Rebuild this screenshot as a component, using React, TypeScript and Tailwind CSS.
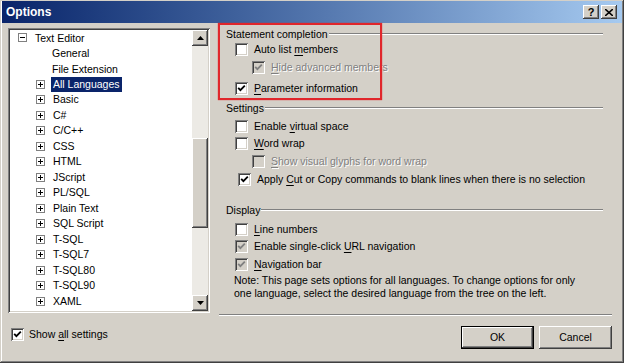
import React from "react";

const FONT = "font-['Liberation_Sans','Arial',sans-serif]";

// raised / sunken win2k bevels
const RAISED =
  "shadow-[inset_-1px_-1px_0_#404040,inset_1px_1px_0_#ffffff,inset_-2px_-2px_0_#808080,inset_2px_2px_0_#d4d0c8]";
const SUNKEN =
  "shadow-[inset_1px_1px_0_#808080,inset_-1px_-1px_0_#ffffff,inset_2px_2px_0_#404040,inset_-2px_-2px_0_#d4d0c8]";

function Key({ text, k }: { text: string; k: number }) {
  return (
    <>
      {text.slice(0, k)}
      <span className="underline underline-offset-[2px]">{text[k]}</span>
      {text.slice(k + 1)}
    </>
  );
}

function Check({ checked, disabled, grey }: { checked?: boolean; disabled?: boolean; grey?: boolean }) {
  const bg = disabled || grey ? "bg-[#d4d0c8]" : "bg-white";
  const mark = disabled || grey ? "#808080" : "#000000";
  return (
    <div className={`w-[13px] h-[13px] shrink-0 flex items-center justify-center ${bg} ${SUNKEN}`}>
      {checked && (
        <svg width="9" height="9" viewBox="0 0 9 9">
          <polyline points="1.2,3.8 3.4,6.2 7.8,1.6" fill="none" stroke={mark} strokeWidth="1.8" />
        </svg>
      )}
    </div>
  );
}

function Option({
  label, k, checked, disabled, grey, indent = 0, mt,
}: { label: string; k: number; checked?: boolean; disabled?: boolean; grey?: boolean; indent?: number; mt: string }) {
  return (
    <div className={`flex items-center h-[14px] ${mt}`} style={{ paddingLeft: indent }}>
      <Check checked={checked} disabled={disabled} grey={grey} />
      <span
        className={`ml-[6px] leading-none whitespace-nowrap ${
          disabled ? "text-[#808080] [text-shadow:1px_1px_0_#ffffff]" : "text-black"
        }`}
      >
        <Key text={label} k={k} />
      </span>
    </div>
  );
}

function Heading({ label, mt }: { label: string; mt: string }) {
  return (
    <div className={`flex items-center h-[14px] pr-[9px] ${mt}`}>
      <span className="leading-none whitespace-nowrap">{label}</span>
      <div className="flex-1 ml-[1px] h-[2px] border-t border-t-[#808080] border-b border-b-white" />
    </div>
  );
}

function ExpandBox({ minus }: { minus?: boolean }) {
  return (
    <div className="w-[9px] h-[9px] border border-[#808080] bg-white flex items-center justify-center relative shrink-0">
      <div className="w-[5px] h-[1px] bg-black" />
      {!minus && <div className="absolute w-[1px] h-[5px] bg-black" />}
    </div>
  );
}

const languages = [
  "All Languages", "Basic", "C#", "C/C++", "CSS", "HTML", "JScript", "PL/SQL",
  "Plain Text", "SQL Script", "T-SQL", "T-SQL7", "T-SQL80", "T-SQL90", "XAML",
];

function Arrow({ up }: { up?: boolean }) {
  return (
    <svg width="7" height="4" viewBox="0 0 7 4">
      <polygon points={up ? "3.5,0 7,4 0,4" : "0,0 7,0 3.5,4"} fill="#000" />
    </svg>
  );
}

function Tree() {
  return (
    <div className={`w-[202px] h-[285px] bg-white flex p-[2px] ${SUNKEN}`}>
      <div className="flex-1 overflow-hidden">
        <div className="flex items-center h-[15.5px] pl-[8px]">
          <ExpandBox minus />
          <span className="ml-[8px] leading-none">Text Editor</span>
        </div>
        <div className="flex items-center h-[15.5px] pl-[42px]">
          <span className="leading-none">General</span>
        </div>
        <div className="flex items-center h-[15.5px] pl-[42px]">
          <span className="leading-none">File Extension</span>
        </div>
        {languages.map((l, i) => (
          <div key={l} className="flex items-center h-[15.5px] pl-[26px]">
            <ExpandBox />
            <span
              className={`ml-[6px] px-[2px] leading-[15px] ${
                i === 0 ? "bg-[#0a246a] text-white" : ""
              }`}
            >
              {l}
            </span>
          </div>
        ))}
      </div>
      {/* vertical scrollbar */}
      <div className="w-[16px] flex flex-col bg-[#eceae5]">
        <div className={`h-[16px] bg-[#d4d0c8] flex items-center justify-center ${RAISED}`}>
          <Arrow up />
        </div>
        <div className="h-[92px]" />
        <div className={`h-[90px] bg-[#d4d0c8] ${RAISED}`} />
        <div className="flex-1" />
        <div className={`h-[16px] bg-[#d4d0c8] flex items-center justify-center ${RAISED}`}>
          <Arrow />
        </div>
      </div>
    </div>
  );
}

function TitleButton({ children }: { children: React.ReactNode }) {
  return (
    <div
      className={`w-[16px] h-[14px] bg-[#d4d0c8] flex items-center justify-center text-[11px] font-bold leading-none text-black ${RAISED}`}
    >
      {children}
    </div>
  );
}

export default function App() {
  return (
    <div
      className={`w-[624px] h-[363px] bg-[#d4d0c8] flex flex-col text-[10.5px] text-black ${FONT} shadow-[inset_-1px_-1px_0_#404040,inset_1px_1px_0_#d4d0c8,inset_-2px_-2px_0_#808080,inset_2px_2px_0_#ffffff]`}
    >
      {/* title bar */}
      <div className="h-[22px] mx-[2px] mt-[1px] flex items-center pl-[4px] pr-[5px] bg-gradient-to-r from-[#0a246a] to-[#a6caf0]">
        <span className="flex-1 text-white font-bold text-[12px] leading-none">Options</span>
        <TitleButton>?</TitleButton>
        <div className="ml-[2px]">
          <TitleButton>
            <svg width="8" height="7" viewBox="0 0 8 7">
              <path d="M0 0 L8 7 M8 0 L0 7" stroke="#000" strokeWidth="1.6" />
            </svg>
          </TitleButton>
        </div>
      </div>

      <div className="flex flex-1 relative">
        {/* left column */}
        <div className="w-[219px] pl-[8px] pt-[5px] flex flex-col">
          <Tree />
          <div className="flex items-center mt-[14px] pl-[3px] h-[14px]">
            <Check checked />
            <span className="ml-[5px] leading-none">
              <Key text="Show all settings" k={5} />
            </span>
          </div>
        </div>

        {/* right column */}
        <div className="flex-1 flex flex-col pr-[12px]">
          <div className="pl-[7px] pt-[4px] flex flex-col h-[291px]">
            <Heading label="Statement completion" mt="mt-0" />
            <div className="pl-[9px]">
              <Option label="Auto list members" k={10} mt="mt-[1px]" />
              <Option label="Hide advanced members" k={0} checked disabled indent={17} mt="mt-[4px]" />
              <Option label="Parameter information" k={0} checked mt="mt-[7px]" />
            </div>
            <Heading label="Settings" mt="mt-[6px]" />
            <div className="pl-[9px]">
              <Option label="Enable virtual space" k={7} mt="mt-[4px]" />
              <Option label="Word wrap" k={0} mt="mt-[3px]" />
              <Option label="Show visual glyphs for word wrap" k={0} disabled indent={17} mt="mt-[4px]" />
              <Option label="Apply Cut or Copy commands to blank lines when there is no selection" k={6} checked indent={3} mt="mt-[4px]" />
            </div>
            <Heading label="Display" mt="mt-[17px]" />
            <div className="pl-[9px]">
              <Option label="Line numbers" k={0} mt="mt-[5px]" />
              <Option label="Enable single-click URL navigation" k={20} checked grey mt="mt-[3px]" />
              <Option label="Navigation bar" k={0} checked grey mt="mt-[4px]" />
            </div>
            <p className="mt-[3px] pl-[8px] leading-[13px]">
              Note: This page sets options for all languages. To change options for only
              <br />
              one language, select the desired language from the tree on the left.
            </p>
          </div>
          <div className="h-[2px] border-t border-t-[#808080] border-b border-b-white" />
          <div className="flex justify-end gap-[5px] mt-[10px]">
            <button className="w-[73px] h-[23px] bg-[#d4d0c8] border border-black shadow-[inset_-1px_-1px_0_#404040,inset_1px_1px_0_#ffffff,inset_-2px_-2px_0_#808080] leading-none">
              OK
            </button>
            <button className={`w-[73px] h-[23px] bg-[#d4d0c8] leading-none ${RAISED}`}>Cancel</button>
          </div>
        </div>

        {/* red annotation rectangle */}
        <div className="absolute left-[218px] top-0 w-[164px] h-[77px] border-[2px] border-[#e0262b] shadow-[0_0_1px_#e0262b] pointer-events-none" />
      </div>
    </div>
  );
}
